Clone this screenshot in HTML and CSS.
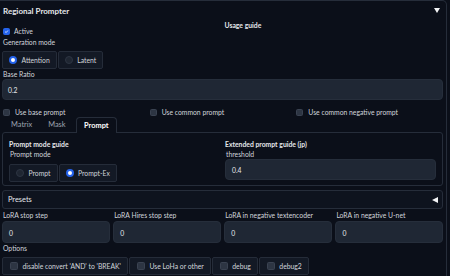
FILE: index.html
```html
<!DOCTYPE html>
<html>
<head>
<meta charset="utf-8">
<link rel="stylesheet" href="styles.css">
</head>
<body>
<div class="panel">
  <div class="panel-head"><span class="title">Regional Prompter</span><span class="tri-down"></span></div>
  <div class="top-row">
    <div class="col">
      <label class="check active-check"><span class="cb checked"><svg viewBox="0 0 10 10" width="7" height="7"><path d="M2.3 5.3 L4.3 7.2 L7.8 3" fill="none" stroke="#fff" stroke-width="1.5"/></svg></span>Active</label>
      <div class="lbl gen">Generation mode</div>
      <div class="radios">
        <label class="radio-item"><span class="rd on"></span>Attention</label>
        <label class="radio-item"><span class="rd"></span>Latent</label>
      </div>
    </div>
    <div class="col"><div class="guide">Usage guide</div></div>
  </div>
  <div class="lbl">Base Ratio</div>
  <div class="input">0.2</div>
  <div class="check-row">
    <label class="check"><span class="cb"></span>Use base prompt</label>
    <label class="check"><span class="cb"></span>Use common prompt</label>
    <label class="check"><span class="cb"></span>Use common negative prompt</label>
  </div>
  <div class="tabs">
    <span class="tab">Matrix</span>
    <span class="tab">Mask</span>
    <span class="tab selected">Prompt</span>
  </div>
  <div class="tab-body">
    <div class="col">
      <div class="bold">Prompt mode guide</div>
      <div class="lbl">Prompt mode</div>
      <div class="radios">
        <label class="radio-item"><span class="rd"></span>Prompt</label>
        <label class="radio-item"><span class="rd on"></span>Prompt-Ex</label>
      </div>
    </div>
    <div class="col">
      <div class="bold">Extended prompt guide (jp)</div>
      <div class="lbl">threshold</div>
      <div class="input thr">0.4</div>
    </div>
  </div>
  <div class="accordion"><span>Presets</span><span class="tri-left"></span></div>
  <div class="lora-row">
    <div class="field"><div class="lbl">LoRA stop step</div><div class="input">0</div></div>
    <div class="field"><div class="lbl">LoRA Hires stop step</div><div class="input">0</div></div>
    <div class="field"><div class="lbl">LoRA in negative textencoder</div><div class="input">0</div></div>
    <div class="field"><div class="lbl">LoRA in negative U-net</div><div class="input">0</div></div>
  </div>
  <div class="lbl">Options</div>
  <div class="checks">
    <label class="check-item"><span class="cb"></span>disable convert 'AND' to 'BREAK'</label>
    <label class="check-item"><span class="cb"></span>Use LoHa or other</label>
    <label class="check-item"><span class="cb"></span>debug</label>
    <label class="check-item"><span class="cb"></span>debug2</label>
  </div>
</div>
</body>
</html>
```

FILE: styles.css
```css
* { box-sizing: border-box; }
body {
  margin: 0;
  background: #0b0f19;
  color: #d1d5db;
  font-family: Lato, "Noto Sans", sans-serif;
  font-size: 6.8px;
  overflow: hidden;
}
.panel {
  width: 447px;
  height: 290px;
  border: 1px solid #262d3a;
  border-left: none;
  border-radius: 0 5px 5px 0;
  padding: 0 3px 0 2px;
}
.panel-head {
  height: 19px;
  display: flex;
  align-items: center;
  justify-content: space-between;
  padding: 1px 3px 0 1px;
}
.title { font-size: 8px; font-weight: 700; color: #e5e7eb; }
.tri-down {
  width: 0; height: 0;
  border-left: 3px solid transparent;
  border-right: 3px solid transparent;
  border-top: 5px solid #f3f4f6;
  margin-top: -1px;
}
.tri-left {
  width: 0; height: 0;
  border-top: 3px solid transparent;
  border-bottom: 3px solid transparent;
  border-right: 6px solid #f3f4f6;
}
.top-row { display: flex; gap: 4px; }
.top-row .col { flex: 1; }
.guide { font-weight: 700; color: #e5e7eb; height: 10px; line-height: 10px; }
.check { display: flex; align-items: center; gap: 4px; }
.active-check { margin-top: 7px; height: 8px; padding-left: 1px; }
.cb {
  width: 7px; height: 7px;
  border-radius: 1.5px;
  background: #2d3543;
  border: 1px solid #3a4251;
  display: inline-flex; align-items: center; justify-content: center;
  flex: none;
}
.cb.checked { background: #2563eb; border-color: #2563eb; }
.lbl { height: 10px; line-height: 10px; padding-left: 1px; }
.gen { margin-top: 2px; }
.radios { display: flex; gap: 1px; margin-top: 4px; }
.radio-item {
  display: flex; align-items: center; gap: 4.5px;
  height: 18px;
  padding: 0 6px 0 6px;
  border: 1px solid #252c39;
  border-radius: 2px;
  background: #131925;
}
.rd {
  width: 8px; height: 8px; border-radius: 50%;
  background: #1f2632;
  border: 1px solid #2d3543;
  flex: none;
}
.rd.on { background: #fff; border: 2.5px solid #2563eb; }
.input {
  height: 21px;
  line-height: 21px;
  background: #1f2734;
  border: 1px solid #262e3b;
  border-radius: 4px;
  padding-left: 5px;
  color: #e5e7eb;
}
.check-row {
  display: flex;
  height: 10px;
  align-items: center;
  padding-left: 1px;
  margin-top: 7px;
}
.check-row .check { width: 148px; gap: 5px; }
.tabs { display: flex; height: 15px; align-items: flex-end; padding-left: 1px; }
.tab { color: #9ca3af; padding: 0 8px; height: 15px; line-height: 16px; font-size: 7.4px; }
.tab.selected {
  color: #fff; font-weight: 700;
  border: 1px solid #262d3a; border-bottom: none;
  border-radius: 4px 4px 0 0;
  height: 16px;
  background: #0b0f19;
  margin-bottom: -1px;
  margin-left: 2px;
  position: relative;
  padding: 0 7.5px;
  line-height: 15px;
}
.tab-body {
  display: flex;
  gap: 5px;
  border: 1px solid #262d3a;
  border-radius: 3px;
  height: 54px;
  padding: 6px 6px 0 6px;
}
.tab-body .col { flex: 1; }
.bold { font-weight: 700; color: #e5e7eb; height: 10px; line-height: 10px; }
.tab-body .lbl { height: 11px; line-height: 11px; }
.tab-body .radios { margin-top: 4px; }
.thr { margin-top: -1px; padding-left: 6px; }
.accordion {
  margin-top: 4px;
  height: 19px;
  border: 1px solid #262d3a;
  border-radius: 3px;
  background: #0e131e;
  display: flex; align-items: center; justify-content: space-between;
  padding: 0 4px 0 5px;
  font-size: 7.4px;
  color: #e5e7eb;
}
.lora-row { display: grid; grid-template-columns: repeat(4, 1fr); gap: 3.5px; margin-top: 1px; }
.lora-row .input { margin-top: 1px; height: 22px; line-height: 22px; padding-left: 6px; }
.checks { display: flex; gap: 1px; margin-top: 4px; }
.check-item {
  display: flex; align-items: center; gap: 4.5px;
  height: 18px;
  padding: 0 6px 0 7px;
  border: 1px solid #252c39;
  border-radius: 2px;
  background: #131925;
}
.check-item .cb { width: 8px; height: 8px; }
```
